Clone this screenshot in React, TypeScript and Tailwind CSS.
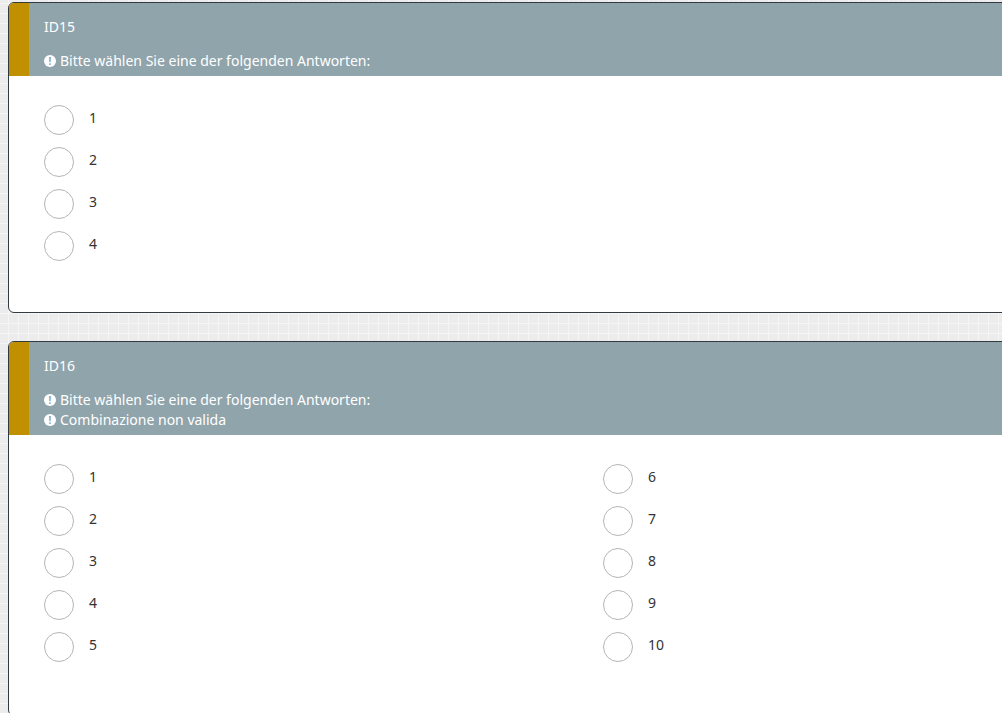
function Warning({ text }: { text: string }) {
  return (
    <div className="flex h-5 items-center">
      <span className="mr-[4px] flex h-3 w-3 items-center justify-center rounded-full bg-white">
        <span className="text-[10px] leading-3 font-bold text-[#90a4ac]">!</span>
      </span>
      {text}
    </div>
  );
}

function Option({ label }: { label: string }) {
  return (
    <div className="flex h-[42px] items-start">
      <span className="mt-[1px] h-[30px] w-[30px] rounded-full border border-[#b5b5b5] bg-white" />
      <span className="ml-[15px] text-sm leading-[28px] text-[#333333]">{label}</span>
    </div>
  );
}

function Question({
  id,
  warnings,
  columns,
  height,
}: {
  id: string;
  warnings: string[];
  columns: string[][];
  height: string;
}) {
  return (
    <div
      className={`${height} w-[1020px] overflow-hidden rounded-md border border-[#333a3f] bg-white`}
    >
      <div className="flex bg-[#90a4ac] text-sm text-white">
        <div className="w-5 shrink-0 bg-[#c09000]" />
        <div className="pt-[13px] pb-[5px] pl-[15px]">
          <div className="mb-[14px] leading-[21px]">{id}</div>
          {warnings.map((w) => (
            <Warning key={w} text={w} />
          ))}
        </div>
      </div>
      <div className="flex pt-[28px] pl-[35px]">
        {columns.map((col) => (
          <div key={col[0]} className="w-[559px] shrink-0">
            {col.map((o) => (
              <Option key={o} label={o} />
            ))}
          </div>
        ))}
      </div>
    </div>
  );
}

export default function App() {
  return (
    <div
      className="h-[713px] overflow-hidden bg-[#ececec] bg-[linear-gradient(#f5f5f5_1px,transparent_1px),linear-gradient(90deg,#f5f5f5_1px,transparent_1px)] bg-[size:10px_10px] bg-[position:8px_3px] pt-[2px] pl-[8px] [font-family:'Noto_Sans',sans-serif]"
    >
      <Question
        id="ID15"
        warnings={["Bitte wählen Sie eine der folgenden Antworten:"]}
        columns={[["1", "2", "3", "4"]]}
        height="h-[311px]"
      />
      <div className="h-[28px]" />
      <Question
        id="ID16"
        warnings={[
          "Bitte wählen Sie eine der folgenden Antworten:",
          "Combinazione non valida",
        ]}
        columns={[
          ["1", "2", "3", "4", "5"],
          ["6", "7", "8", "9", "10"],
        ]}
        height="h-[375px]"
      />
    </div>
  );
}
